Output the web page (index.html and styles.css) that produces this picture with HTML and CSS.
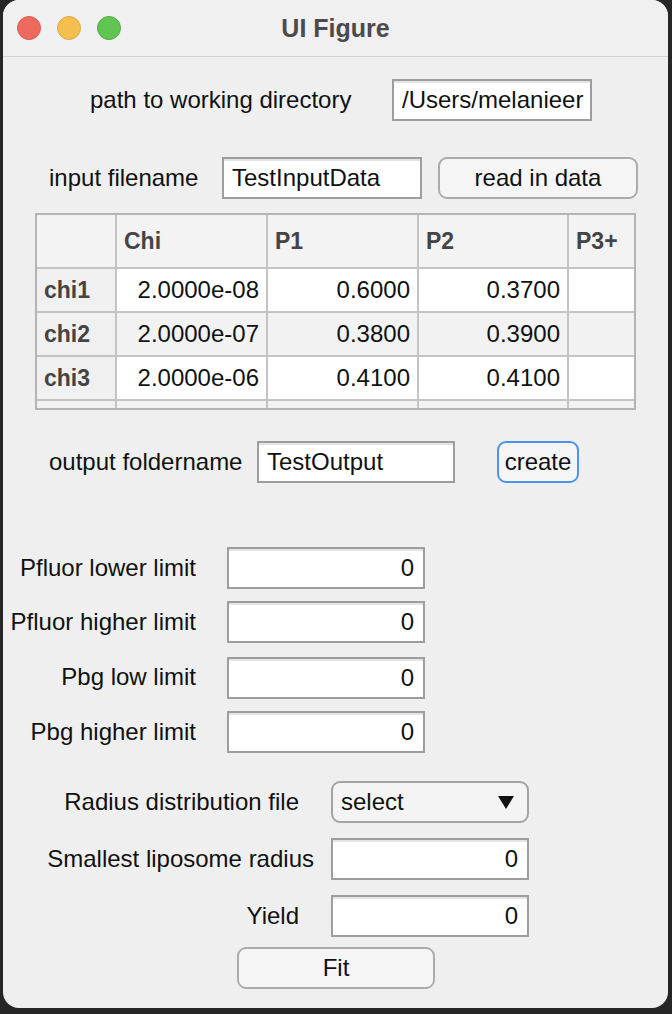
FILE: index.html
```html
<!DOCTYPE html>
<html>
<head>
<meta charset="utf-8">
<link rel="stylesheet" href="styles.css">
</head>
<body>
<div class="window">
  <div class="titlebar">
    <div class="lights">
      <span class="light red"></span>
      <span class="light yellow"></span>
      <span class="light green"></span>
    </div>
    <div class="title">UI Figure</div>
  </div>
  <div class="content">
    <div class="row row-path">
      <span class="label">path to working directory</span>
      <div class="field w200">/Users/melanieer</div>
    </div>
    <div class="row row-input">
      <span class="label">input filename</span>
      <div class="field w200">TestInputData</div>
      <div class="btn w200">read in data</div>
    </div>
    <div class="table-wrap">
      <table class="grid">
        <colgroup>
          <col class="c0"><col class="c1"><col class="c2"><col class="c3"><col class="c4">
        </colgroup>
        <thead>
          <tr><th></th><th>Chi</th><th>P1</th><th>P2</th><th>P3+</th></tr>
        </thead>
        <tbody>
          <tr><th>chi1</th><td>2.0000e-08</td><td>0.6000</td><td>0.3700</td><td></td></tr>
          <tr class="alt"><th>chi2</th><td>2.0000e-07</td><td>0.3800</td><td>0.3900</td><td></td></tr>
          <tr><th>chi3</th><td>2.0000e-06</td><td>0.4100</td><td>0.4100</td><td></td></tr>
          <tr class="alt"><th></th><td></td><td></td><td></td><td></td></tr>
        </tbody>
      </table>
    </div>
    <div class="row row-output">
      <span class="label">output foldername</span>
      <div class="field w198">TestOutput</div>
      <div class="btn focused">create</div>
    </div>
    <div class="limits">
      <span class="rlabel">Pfluor lower limit</span><div class="field num">0</div>
      <span class="rlabel">Pfluor higher limit</span><div class="field num">0</div>
      <span class="rlabel">Pbg low limit</span><div class="field num">0</div>
      <span class="rlabel">Pbg higher limit</span><div class="field num">0</div>
    </div>
    <div class="fitblock">
      <span class="rlabel">Radius distribution file</span>
      <div class="dropdown"><span>select</span><svg class="arrow" width="16" height="13" viewBox="0 0 16 13"><polygon points="0,0 16,0 8,13" fill="#111"/></svg></div>
      <span class="rlabel over">Smallest liposome radius</span><div class="field num">0</div>
      <span class="rlabel">Yield</span><div class="field num">0</div>
    </div>
    <div class="fitrow">
      <div class="btn w198">Fit</div>
    </div>
  </div>
</div>
</body>
</html>
```

FILE: styles.css
```css
html, body {
  margin: 0;
  padding: 0;
}
body {
  width: 672px;
  height: 1014px;
  background: #262626;
  font-family: "Liberation Sans", Arial, Helvetica, sans-serif;
  color: #111;
  overflow: hidden;
}
.window {
  margin-left: 3px;
  width: 665px;
  height: 1008px;
  background: #efefef;
  border-radius: 16px;
  overflow: hidden;
}
.titlebar {
  height: 56px;
  border-bottom: 1px solid #d3d3d3;
  display: flex;
  align-items: center;
  position: relative;
  background: #f0f0f0;
}
.lights {
  display: flex;
  gap: 16px;
  padding-left: 14px;
}
.light {
  width: 24px;
  height: 24px;
  border-radius: 50%;
  box-sizing: border-box;
}
.red { background: #ee6a5e; border: 1px solid #d85a4f; }
.yellow { background: #f5bf4f; border: 1px solid #dba841; }
.green { background: #61c554; border: 1px solid #52a846; }
.title {
  position: absolute;
  left: 0;
  right: 0;
  top: 0;
  line-height: 56px;
  text-align: center;
  font-weight: bold;
  font-size: 25px;
  color: #4b4b4b;
}
.content {
  display: flex;
  flex-direction: column;
}
.row {
  display: flex;
  align-items: center;
  height: 42px;
}
.label {
  font-size: 24px;
  white-space: nowrap;
}
.field {
  box-sizing: border-box;
  height: 42px;
  border: 2px solid #9e9e9e;
  background: #fff;
  font-size: 24px;
  line-height: 38px;
  padding: 0 8px;
  white-space: nowrap;
  overflow: hidden;
  box-shadow: inset 0 2px 0 #e4e4e4;
}
.w200 { width: 200px; }
.w198 { width: 198px; }
.btn {
  box-sizing: border-box;
  height: 42px;
  border: 2px solid #ababab;
  border-radius: 9px;
  background: #f5f5f5;
  font-size: 24px;
  line-height: 38px;
  text-align: center;
}
.btn.focused {
  border-color: #4a94ee;
  width: 82px;
}
.row-path {
  margin-top: 22px;
  padding-left: 87px;
}
.row-path .label { width: 302px; }
.row-input {
  margin-top: 36px;
  padding-left: 46px;
}
.row-input .label { width: 173px; }
.row-input .btn { margin-left: 16px; }
.table-wrap {
  margin-top: 14px;
  margin-left: 32px;
  width: 601px;
  height: 197px;
  box-sizing: border-box;
  border: 2px solid #b4b4b4;
  overflow: hidden;
  background: #f0f0f0;
}
.grid {
  border-collapse: collapse;
  table-layout: fixed;
  width: 599px;
  margin: -2px 0 0 -2px;
}
.c0 { width: 80px; }
.c1 { width: 151px; }
.c2 { width: 151px; }
.c3 { width: 150px; }
.c4 { width: 69px; }
.grid th, .grid td {
  border: 2px solid #c4c4c4;
  font-size: 24px;
  padding: 0 7px;
  white-space: nowrap;
  overflow: hidden;
}
.grid thead th {
  height: 52px;
  text-align: left;
  font-weight: bold;
  color: #444;
  background: #f3f3f3;
  font-size: 23px;
}
.grid tbody th {
  height: 42px;
  text-align: left;
  font-weight: bold;
  color: #444;
  background: #f0f0f0;
  font-size: 23px;
}
.grid tbody td {
  height: 42px;
  text-align: right;
  background: #fff;
}
.grid tbody tr.alt td {
  background: #f2f2f2;
}
.row-output {
  margin-top: 31px;
  padding-left: 46px;
}
.row-output .label { width: 208px; }
.row-output .btn { margin-left: 42px; }
.limits {
  margin-top: 64px;
  display: grid;
  grid-template-columns: 193px 198px;
  column-gap: 31px;
  row-gap: 12px;
  align-items: center;
}
.rlabel {
  font-size: 24px;
  text-align: right;
  white-space: nowrap;
}
.num {
  text-align: right;
  padding-right: 9px;
}
.limits .field:nth-of-type(3) { margin-top: 2px; }
.fitblock {
  margin-top: 28px;
  display: grid;
  grid-template-columns: 296px 198px;
  column-gap: 32px;
  row-gap: 15px;
  align-items: center;
}
.rlabel.over { margin-right: -15px; }
.dropdown {
  box-sizing: border-box;
  height: 42px;
  border: 2px solid #a3a3a3;
  border-radius: 9px;
  background: #f4f4f4;
  font-size: 24px;
  display: flex;
  align-items: center;
  justify-content: space-between;
  padding: 0 13px 0 8px;
}
.arrow {
  display: block;
}
.fitrow {
  margin-top: 10px;
  padding-left: 234px;
}
```
